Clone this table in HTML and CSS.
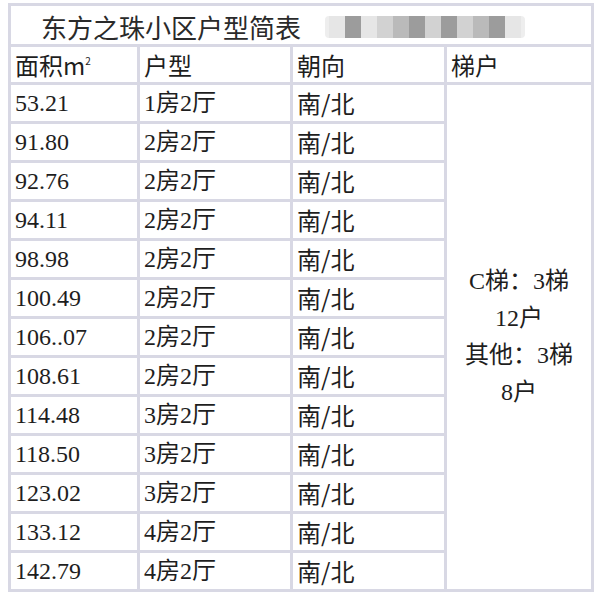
FILE: index.html
```html
<!DOCTYPE html>
<html lang="zh">
<head>
<meta charset="utf-8">
<link rel="stylesheet" href="styles.css">
</head>
<body>
<table class="sheet">
  <colgroup>
    <col class="c1"><col class="c2"><col class="c3"><col class="c4">
  </colgroup>
  <tr class="title-row">
    <td colspan="4" class="title"><span class="title-text">东方之珠小区户型简表</span><span class="blur"><i class="b3"></i><i class="b2"></i><i class="b3"></i><i class="b1"></i><i class="b4"></i><i class="b2"></i><i class="b1"></i><i class="b2"></i><i class="b1"></i><i class="b4"></i><i class="b2"></i><i class="b3"></i></span></td>
  </tr>
  <tr class="head">
    <td>面积m<span class="sq">2</span></td><td>户型</td><td>朝向</td><td>梯户</td>
  </tr>
  <tr><td>53.21</td><td>1房2厅</td><td class="dir">南/北</td><td class="lift" rowspan="13">C梯：3梯<br>12户<br>其他：3梯<br>8户</td></tr>
  <tr><td>91.80</td><td>2房2厅</td><td class="dir">南/北</td></tr>
  <tr><td>92.76</td><td>2房2厅</td><td class="dir">南/北</td></tr>
  <tr><td>94.11</td><td>2房2厅</td><td class="dir">南/北</td></tr>
  <tr><td>98.98</td><td>2房2厅</td><td class="dir">南/北</td></tr>
  <tr><td>100.49</td><td>2房2厅</td><td class="dir">南/北</td></tr>
  <tr><td>106..07</td><td>2房2厅</td><td class="dir">南/北</td></tr>
  <tr><td>108.61</td><td>2房2厅</td><td class="dir">南/北</td></tr>
  <tr><td>114.48</td><td>3房2厅</td><td class="dir">南/北</td></tr>
  <tr><td>118.50</td><td>3房2厅</td><td class="dir">南/北</td></tr>
  <tr><td>123.02</td><td>3房2厅</td><td class="dir">南/北</td></tr>
  <tr><td>133.12</td><td>4房2厅</td><td class="dir">南/北</td></tr>
  <tr><td>142.79</td><td>4房2厅</td><td class="dir">南/北</td></tr>
</table>
</body>
</html>
```
FILE: styles.css
```css
html, body {
  margin: 0;
  padding: 0;
  background: #ffffff;
}
body {
  padding: 3px 0 0 8px;
  font-family: "Liberation Serif", "Noto Sans CJK SC", serif;
  font-size: 24px;
  color: #1e1e1e;
}
.sheet {
  border-collapse: collapse;
  table-layout: fixed;
  width: 583px;
}
.c1 { width: 129px; }
.c2 { width: 153px; }
.c3 { width: 154px; }
.c4 { width: 147px; }
.sheet td {
  border: 3px solid #d8d8e4;
  padding: 0 4px;
  height: 36px;
  line-height: 36px;
  vertical-align: middle;
  white-space: nowrap;
  overflow: hidden;
}
.sheet .title-row td {
  height: 34px;
  line-height: 34px;
}
.sheet td.title {
  text-align: left;
  padding-left: 30px;
  font-family: "Noto Sans CJK SC", sans-serif;
  font-size: 26px;
  color: #2a2a2a;
}
.title-text {
  vertical-align: middle;
}
.blur {
  display: inline-flex;
  vertical-align: middle;
  margin-left: 24px;
  height: 22px;
  background: #eeeeee;
  padding: 0 4px;
  border-radius: 4px;
}
.blur i {
  display: block;
  width: 16px;
  height: 22px;
}
.blur .b1 { background: #d2d2d2; }
.blur .b2 { background: #9c9c9c; }
.blur .b3 { background: #e6e6e6; }
.blur .b4 { background: #bababa; }
.sheet .head td {
  height: 35px;
  line-height: 35px;
  font-family: "Noto Sans CJK SC", "Liberation Sans", sans-serif;
  font-size: 24px;
}
.sq {
  font-size: 10px;
  vertical-align: 10px;
  line-height: 0;
}
.dir {
  font-family: "Noto Sans CJK SC", sans-serif;
}
.sheet td.lift {
  text-align: center;
  white-space: normal;
  line-height: 37px;
  padding: 0;
}
```
